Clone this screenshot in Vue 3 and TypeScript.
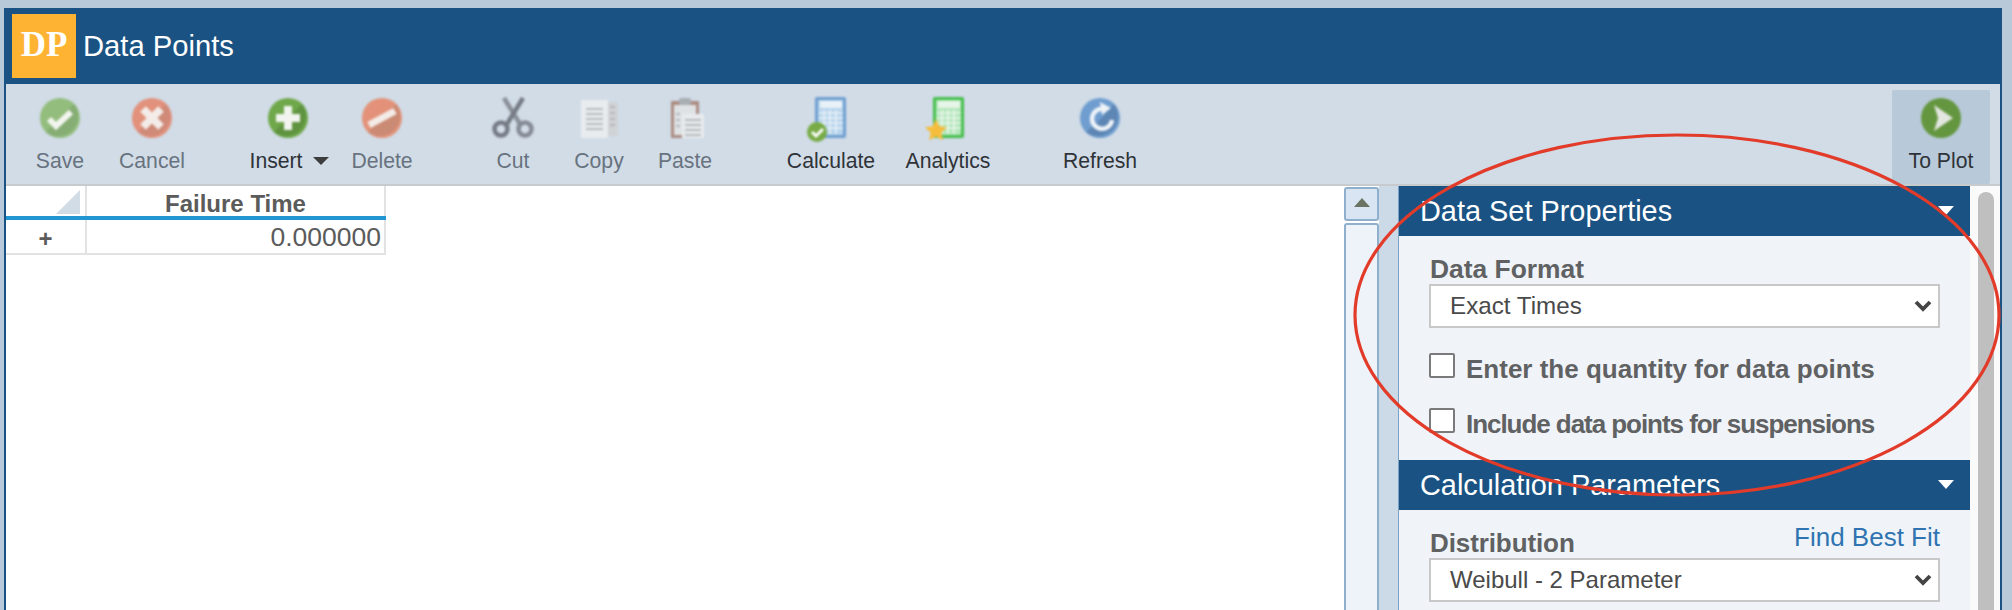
<script setup lang="ts">
const dataFormat = 'Exact Times'
const distribution = 'Weibull - 2 Parameter'
</script>

<template>
  <div class="page">
    <div class="window">
      <header class="titlebar">
        <div class="logo">DP</div>
        <h1 class="title">Data Points</h1>
      </header>

      <div class="toolbar">
        <div class="group">
          <div class="tool off">
            <svg class="ico" viewBox="0 0 44 44"><circle cx="22" cy="22" r="20" fill="#93bd7d"/><path d="M36 8A20 20 0 0 1 8 36L16 28Z" fill="#86ad73"/><path d="M11 23l7 7 15-14" fill="none" stroke="#f2f5ef" stroke-width="6"/></svg>
            <span>Save</span>
          </div>
          <div class="tool off">
            <svg class="ico" viewBox="0 0 44 44"><circle cx="22" cy="22" r="20" fill="#e2917c"/><path d="M36 8A20 20 0 0 1 8 36Z" fill="#cf8a78"/><path d="M13 13l18 18M31 13L13 31" stroke="#f3ece8" stroke-width="8"/></svg>
            <span>Cancel</span>
          </div>
        </div>

        <div class="group g2">
          <div class="tool">
            <svg class="ico" viewBox="0 0 44 44"><circle cx="22" cy="22" r="20" fill="#6fa84a"/><path d="M36 8A20 20 0 0 1 8 36L16 28Z" fill="#5f9340"/><path d="M22 10v24M10 22h24" stroke="#f2f4f0" stroke-width="8"/></svg>
            <span class="insert">Insert<i class="caret"></i></span>
          </div>
          <div class="tool off">
            <svg class="ico" viewBox="0 0 44 44"><circle cx="22" cy="22" r="20" fill="#e39279"/><path d="M36 8A20 20 0 0 1 8 36Z" fill="#cb8a74"/><path d="M9 29L35 15" stroke="#f3ece8" stroke-width="7"/></svg>
            <span>Delete</span>
          </div>
        </div>

        <div class="group g3">
          <div class="tool off">
            <svg class="ico" viewBox="0 0 44 44"><path d="M13 2l16 26" stroke="#8b9099" stroke-width="4.5" fill="none"/><path d="M32 2L16 28" stroke="#767b85" stroke-width="4.5" fill="none"/><circle cx="10" cy="33" r="6.5" fill="none" stroke="#767b85" stroke-width="4.5"/><circle cx="34" cy="33" r="6.5" fill="none" stroke="#868b95" stroke-width="4.5"/></svg>
            <span>Cut</span>
          </div>
          <div class="tool off">
            <svg class="ico" viewBox="0 0 44 44"><rect x="22" y="6" width="19" height="34" fill="#d0d3d6"/><rect x="4" y="4" width="27" height="38" fill="#e9ecef"/><path d="M9 13h17M9 18h17M9 23h17M9 28h17M9 33h17" stroke="#a8abae" stroke-width="1.6"/><path d="M33 11h5M33 17h5M33 23h5M33 29h5" stroke="#aaadb0" stroke-width="1.6"/></svg>
            <span>Copy</span>
          </div>
          <div class="tool off">
            <svg class="ico" viewBox="0 0 44 44"><rect x="8" y="5" width="28" height="37" rx="1" fill="#ab8d82"/><rect x="11" y="9" width="22" height="30" fill="#dfe2e4"/><rect x="16" y="2" width="12" height="7" rx="2" fill="#a9aeb3"/><rect x="19" y="18" width="22" height="24" fill="#e8ebee"/><path d="M22 24h16M22 29h16M22 34h16M22 39h16M13 18h4M13 24h4M13 30h4" stroke="#a6aaad" stroke-width="1.5"/></svg>
            <span>Paste</span>
          </div>
        </div>

        <div class="group g4">
          <div class="tool on">
            <svg class="ico" viewBox="0 0 44 44"><g transform="translate(-4 -1)"><rect x="10" y="2" width="31" height="41" rx="2" fill="#6f9fd0"/><rect x="13" y="5" width="25" height="35" fill="#b7d4ec"/><rect x="15" y="6" width="22" height="7" fill="#e8f1f7"/><path d="M14 18h24M14 23h24M14 28h24M14 33h24M19 15v24M25 15v24M31 15v24" stroke="#e8f1f7" stroke-width="1.6"/></g><circle cx="8" cy="36" r="10" fill="#78ab46"/><path d="M3 36l4 4 7-7" fill="none" stroke="#fff" stroke-width="3"/></svg>
            <span>Calculate</span>
          </div>
          <div class="tool on">
            <svg class="ico" viewBox="0 0 44 44"><g transform="translate(-3 -1)"><rect x="10" y="2" width="31" height="41" rx="2" fill="#46bf4c"/><rect x="13" y="5" width="25" height="35" fill="#b3e6bb"/><rect x="15" y="6" width="22" height="7" fill="#e5f5e8"/><path d="M14 18h24M14 23h24M14 28h24M14 33h24M19 15v24M25 15v24M31 15v24" stroke="#eaf7ec" stroke-width="1.6"/></g><path d="M10 23l3.400 7.200 7.600 1-5.600 5.400 1.400 7.600-6.800-3.700-6.800 3.700 1.400-7.600-5.600-5.400 7.600-1z" fill="#f6bd3c"/></svg>
            <span>Analytics</span>
          </div>
        </div>

        <div class="group g5">
          <div class="tool on">
            <svg class="ico" viewBox="0 0 44 44"><circle cx="22" cy="22" r="20" fill="#6f9dcf"/><path d="M36 8A20 20 0 0 1 8 36L20 26Z" fill="#5d86b4"/><path d="M26 13a10 10 0 1 0 8 11" fill="none" stroke="#eef3f8" stroke-width="4.500"/><path d="M22 6l11 6-9 7z" fill="#eef3f8"/></svg>
            <span>Refresh</span>
          </div>
        </div>

        <div class="tool on plot">
          <svg class="ico" viewBox="0 0 44 44"><circle cx="22" cy="22" r="20" fill="#64963f"/><path d="M15 9l19 13-19 13 4-13z" fill="#e3e7e0"/></svg>
          <span>To Plot</span>
        </div>
      </div>

      <div class="content">
        <div class="sheet">
          <table class="grid">
            <thead>
              <tr>
                <th class="corner"><i class="tri"></i></th>
                <th class="col">Failure Time</th>
              </tr>
            </thead>
            <tbody>
              <tr>
                <td class="rowhead">+</td>
                <td class="value">0.000000</td>
              </tr>
            </tbody>
          </table>
        </div>

        <div class="vscroll">
          <button class="up" type="button" aria-label="Scroll up"><i></i></button>
          <div class="track"></div>
        </div>
        <div class="splitter"></div>

        <aside class="panel">
          <section>
            <div class="sec-head">
              <span>Data Set Properties</span><i class="sec-caret"></i>
            </div>
            <div class="sec-body first">
              <div class="field-label">Data Format</div>
              <div class="select">{{ dataFormat }}
                <svg class="chev" viewBox="0 0 18 12"><path d="M2 2l7 7 7-7" fill="none" stroke="#444" stroke-width="3.800"/></svg>
              </div>
              <label class="check one"><input type="checkbox" /><span>Enter the quantity for data points</span></label>
              <label class="check two"><input type="checkbox" /><span>Include data points for suspensions</span></label>
            </div>
          </section>
          <section>
            <div class="sec-head">
              <span>Calculation Parameters</span><i class="sec-caret"></i>
            </div>
            <div class="sec-body">
              <div class="field-row">
                <div class="field-label dist">Distribution</div>
                <a class="link">Find Best Fit</a>
              </div>
              <div class="select weibull">{{ distribution }}
                <svg class="chev" viewBox="0 0 18 12"><path d="M2 2l7 7 7-7" fill="none" stroke="#444" stroke-width="3.800"/></svg>
              </div>
            </div>
          </section>
        </aside>

        <div class="rail"><div class="thumb"></div></div>
      </div>
    </div>

    <svg class="annotation" width="2012" height="610" viewBox="0 0 2012 610">
      <ellipse cx="1677" cy="315" rx="322" ry="180" fill="none" stroke="#e23b29" stroke-width="3.200"/>
    </svg>
  </div>
</template>

<style>
html, body { margin: 0; height: 610px; overflow: hidden; background: #b8cad9; }
</style>

<style scoped>
.page {
  position: relative;
  width: 2012px;
  height: 610px;
  padding: 8px 0 0 4px;
  box-sizing: border-box;
  overflow: hidden;
  background: #b8cad9;
  font-family: "Liberation Sans", Arial, sans-serif;
}
.window {
  width: 1998px;
  height: 602px;
  display: flex;
  flex-direction: column;
  box-sizing: border-box;
  background: #1a5383;
}
.titlebar {
  height: 76px;
  flex: none;
  display: flex;
  align-items: center;
  padding-left: 8px;
  gap: 7px;
  background: #1a5383;
}
.logo {
  width: 64px;
  height: 64px;
  background: #feb432;
  color: #fff;
  font: bold 35px/62px "Liberation Serif", serif;
  text-align: center;
}
.title {
  margin: 0;
  color: #fff;
  font-size: 29.200px;
  font-weight: 400;
}
.toolbar {
  height: 102px;
  flex: none;
  display: flex;
  box-sizing: border-box;
  margin: 0 2px;
  padding-left: 14px;
  background: #d1dce7;
  border-bottom: 2px solid #c8cbce;
}
.group { display: flex; }
.group:first-child { gap: 12px; }
.g2 { margin-left: 56px; gap: 14px; }
.g3 { margin-left: 51px; gap: 6px; }
.g4 { margin-left: 66px; gap: 37px; }
.g5 { margin-left: 72px; }
.tool {
  width: 80px;
  display: flex;
  flex-direction: column;
  align-items: center;
  padding-top: 12px;
  font-size: 21.200px;
  line-height: 24px;
  white-space: nowrap;
  color: #2f3338;
}
.tool .ico {
  width: 44px;
  height: 44px;
  flex: none;
  margin-bottom: 9px;
  overflow: visible;
  filter: blur(0.8px);
}
.tool.off { color: #68737f; }
.tool.on { color: #2f3338; }
.insert { display: inline-flex; align-items: center; margin-left: 2px; }
.caret {
  width: 0;
  height: 0;
  margin-left: 10px;
  border-left: 8px solid transparent;
  border-right: 8px solid transparent;
  border-top: 8px solid #3d3d3d;
}
.plot {
  width: 98px;
  margin: 6px 10px 6px auto;
  padding-top: 6px;
  background: #b8cad9;
  border-radius: 2px;
  height: 88px;
}
.content {
  flex: 1;
  min-height: 0;
  display: flex;
  margin: 0 2px;
  background: #fff;
}
.sheet { flex: 1; min-width: 0; }
.grid {
  border-collapse: collapse;
  table-layout: fixed;
  width: 380px;
  color: #5b5b5b;
}
.corner {
  width: 79px;
  height: 30px;
  padding: 0;
  position: relative;
  border-right: 2px solid #e2e2e2;
  border-bottom: 4px solid #2196d3;
}
.tri {
  position: absolute;
  right: 5px;
  top: 4px;
  width: 0;
  height: 0;
  border-left: 24px solid transparent;
  border-bottom: 24px solid #d1dce7;
}
.col {
  height: 30px;
  padding: 5px 0 0;
  box-sizing: border-box;
  font-size: 24px;
  line-height: 25px;
  font-weight: 700;
  text-align: center;
  border-right: 2px solid #e2e2e2;
  border-bottom: 4px solid #2196d3;
}
.rowhead {
  height: 34px;
  padding: 4px 0 0;
  box-sizing: border-box;
  text-align: center;
  font-size: 24px;
  font-weight: 700;
  border-right: 2px solid #e2e2e2;
  border-bottom: 2px solid #e2e2e2;
}
.value {
  height: 34px;
  padding: 2px 3px 0 0;
  box-sizing: border-box;
  text-align: right;
  font-size: 26.500px;
  border-right: 2px solid #e2e2e2;
  border-bottom: 2px solid #e2e2e2;
}
.vscroll {
  width: 35px;
  flex: none;
  display: flex;
  flex-direction: column;
  gap: 2px;
  padding-top: 1px;
}
.up {
  width: 35px;
  height: 34px;
  flex: none;
  padding: 0;
  display: flex;
  align-items: center;
  justify-content: center;
  box-sizing: border-box;
  background: #d9e5f2;
  border: 2px solid #8fb0cc;
  border-radius: 3px;
}
.up i {
  width: 0;
  height: 0;
  border-left: 8px solid transparent;
  border-right: 8px solid transparent;
  border-bottom: 9px solid #6b7462;
  margin-bottom: 4px;
}
.track {
  flex: 1;
  box-sizing: border-box;
  background: #edf3f9;
  border: 2px solid #8fb0cc;
  border-bottom: 0;
  border-radius: 3px 3px 0 0;
}
.splitter {
  width: 20px;
  flex: none;
  box-sizing: border-box;
  background: #ccd9e6;
  border-right: 1.500px solid #7ba2c4;
}
.panel {
  width: 571px;
  flex: none;
  background: #f0f4f8;
}
.sec-head {
  height: 50px;
  display: flex;
  align-items: center;
  justify-content: space-between;
  box-sizing: border-box;
  padding: 0 16px 0 21px;
  background: #1a5383;
  color: #fff;
  font-size: 28.900px;
}
.sec-caret {
  width: 0;
  height: 0;
  margin-bottom: 2px;
  border-left: 8px solid transparent;
  border-right: 8px solid transparent;
  border-top: 9px solid #fff;
}
.sec-body {
  padding: 0 30px 27px;
  color: #5f6163;
}
.sec-body.first { padding-top: 18px; }
.field-label {
  height: 30px;
  line-height: 30px;
  padding-left: 1px;
  font-size: 26.400px;
  font-weight: 700;
}
.field-label.dist { font-size: 26px; letter-spacing: -0.1px; }
.field-row {
  height: 48px;
  display: flex;
  align-items: flex-end;
  justify-content: space-between;
}
.link {
  color: #2f74b0;
  font-size: 26px;
  line-height: 30px;
  margin-bottom: 6px;
}
.select {
  position: relative;
  height: 44px;
  box-sizing: border-box;
  padding-left: 19px;
  background: #fff;
  border: 2px solid #c8c8c8;
  color: #4a4a4a;
  font-size: 24.200px;
  line-height: 40px;
}
.select.weibull { font-size: 24px; }
.chev {
  position: absolute;
  right: 6px;
  top: 14px;
  width: 18px;
  height: 12px;
}
.check {
  display: flex;
  align-items: flex-start;
  gap: 11px;
  height: 25px;
  font-size: 26px;
  font-weight: 700;
}
.check.one { margin-top: 25px; }
.check.two { margin-top: 30px; letter-spacing: -1.05px; }
.check input {
  appearance: none;
  width: 26px;
  height: 25px;
  margin: 0;
  flex: none;
  box-sizing: border-box;
  background: #fff;
  border: 2px solid #7a7a7a;
  border-radius: 2px;
}
.check span {
  line-height: 32px;
  white-space: nowrap;
}
.rail {
  width: 30px;
  flex: none;
  box-sizing: border-box;
  background: #fafafa;
  padding: 6px 6px 0 8px;
}
.thumb {
  height: 500px;
  background: #bfbfbf;
  border-radius: 8px 8px 0 0;
}
.annotation {
  position: absolute;
  left: 0;
  top: 0;
  pointer-events: none;
}
</style>
